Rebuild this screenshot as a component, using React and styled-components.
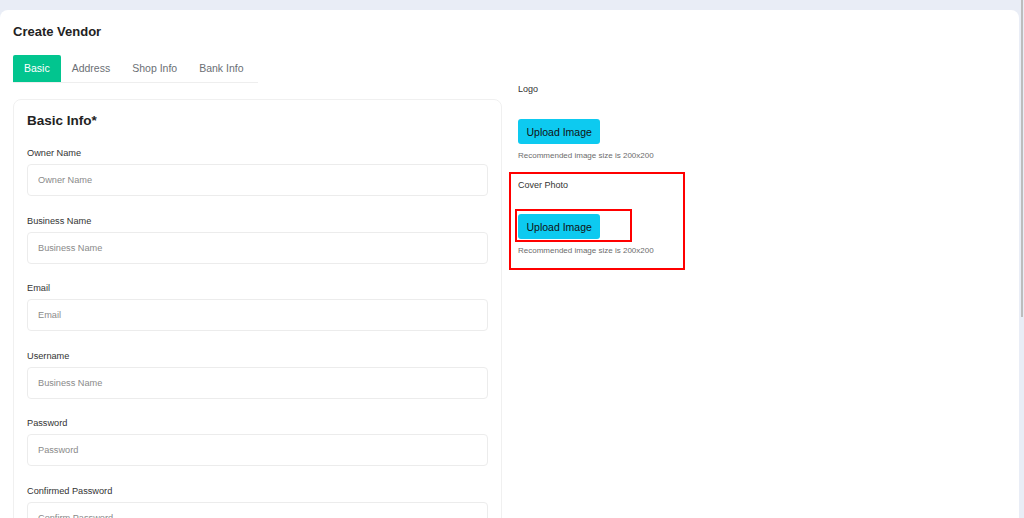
import React, { useState } from "react";
import styled, { createGlobalStyle } from "styled-components";

const GlobalStyle = createGlobalStyle`
  html, body {
    margin: 0;
    padding: 0;
    height: 100%;
    overflow: hidden;
    background: #e9edf6;
    font-family: "Liberation Sans", Arial, sans-serif;
  }
`;

const Page = styled.div`
  padding: 10px 5px 0 0;
  height: 518px;
  box-sizing: border-box;
`;

const Card = styled.div`
  background: #ffffff;
  border-radius: 8px 8px 0 0;
  height: 100%;
  padding: 15px 13px 0;
  box-sizing: border-box;
  overflow: hidden;
`;

const Title = styled.h1`
  margin: 0;
  font-size: 13px;
  line-height: 14px;
  font-weight: 700;
  color: #222;
`;

const Tabs = styled.div`
  display: flex;
  width: 245px;
  margin-top: 16px;
  border-bottom: 1px solid #eeeeee;
`;

const Tab = styled.button`
  border: none;
  background: ${(p) => (p.$active ? "#02c58f" : "transparent")};
  color: ${(p) => (p.$active ? "#ffffff" : "#6b6f75")};
  font-family: inherit;
  font-size: 10.5px;
  height: 27px;
  padding: 0 11px 1px;
  border-radius: 2px 2px 0 0;
  cursor: pointer;
`;

const Row = styled.div`
  display: flex;
  align-items: flex-start;
  gap: 16px;
`;

const Panel = styled.div`
  width: 489px;
  box-sizing: border-box;
  margin-top: 16px;
  border: 1px solid #f0f0f0;
  border-radius: 8px;
  padding: 12px 13px 0;
`;

const PanelTitle = styled.h2`
  margin: 0 0 16px;
  font-size: 13.5px;
  line-height: 18px;
  font-weight: 700;
  color: #222;
`;

const Field = styled.div`
  margin-bottom: 17.5px;
`;

const Label = styled.label`
  display: block;
  font-size: 9.2px;
  line-height: 14px;
  color: #333;
  margin-bottom: 4px;
`;

const Input = styled.input`
  display: block;
  width: 100%;
  box-sizing: border-box;
  height: 32px;
  border: 1px solid #ececec;
  border-radius: 4px;
  padding: 0 10px;
  font-family: inherit;
  font-size: 9.2px;
  color: #333;
  outline: none;
  &::placeholder {
    color: #8a8a8a;
  }
`;

const Side = styled.div`
  margin-top: -1px;
  display: flex;
  flex-direction: column;
`;

const UploadGroup = styled.div`
  width: 165px;
  padding-top: ${(p) => (p.$marked ? "4px" : "0")};
  margin: ${(p) => (p.$marked ? "11px 0 0 -9px" : "0")};
  padding-left: ${(p) => (p.$marked ? "7px" : "0")};
  padding-bottom: ${(p) => (p.$marked ? "12px" : "0")};
  border: ${(p) => (p.$marked ? "2px solid #ff0000" : "none")};
`;

const SideLabel = styled.div`
  font-size: 9px;
  line-height: 14px;
  color: #333;
  margin-bottom: 23px;
`;

const Mark = styled.div`
  display: inline-block;
  border: 2px solid #ff0000;
  margin: -6px 0 -3px -3px;
  padding: 3px 30px 1px 1px;
  line-height: 0;
`;

const UploadButton = styled.button`
  height: 25px;
  padding: 0 8.5px;
  border: none;
  border-radius: 3px;
  background: #0dcaf0;
  color: #111;
  font-family: inherit;
  font-size: 10.5px;
  cursor: pointer;
`;

const Hint = styled.div`
  font-size: 8px;
  line-height: 10px;
  color: #6c6c6c;
  margin-top: 7px;
`;

const ScrollThumb = styled.div`
  position: fixed;
  top: 0;
  right: 1px;
  width: 2px;
  height: 317px;
  background: #bdbdbd;
`;

const fields = [
  ["Owner Name", "Owner Name", "text"],
  ["Business Name", "Business Name", "text"],
  ["Email", "Email", "email"],
  ["Username", "Business Name", "text"],
  ["Password", "Password", "password"],
  ["Confirmed Password", "Confirm Password", "password"],
];

const tabs = ["Basic", "Address", "Shop Info", "Bank Info"];

const Upload = ({ label, marked }) => (
  <UploadGroup $marked={marked}>
    <SideLabel>{label}</SideLabel>
    {marked ? (
      <Mark>
        <UploadButton>Upload Image</UploadButton>
      </Mark>
    ) : (
      <UploadButton>Upload Image</UploadButton>
    )}
    <Hint>Recommended image size is 200x200</Hint>
  </UploadGroup>
);

export default function App() {
  const [active, setActive] = useState("Basic");

  return (
    <Page>
      <GlobalStyle />
      <Card>
        <Title>Create Vendor</Title>
        <Tabs>
          {tabs.map((t) => (
            <Tab key={t} $active={t === active} onClick={() => setActive(t)}>
              {t}
            </Tab>
          ))}
        </Tabs>
        <Row>
          <Panel>
            <PanelTitle>Basic Info*</PanelTitle>
            {fields.map(([label, placeholder, type]) => (
              <Field key={label}>
                <Label>{label}</Label>
                <Input type={type} placeholder={placeholder} />
              </Field>
            ))}
          </Panel>
          <Side>
            <Upload label="Logo" />
            <Upload label="Cover Photo" marked />
          </Side>
        </Row>
      </Card>
      <ScrollThumb />
    </Page>
  );
}
